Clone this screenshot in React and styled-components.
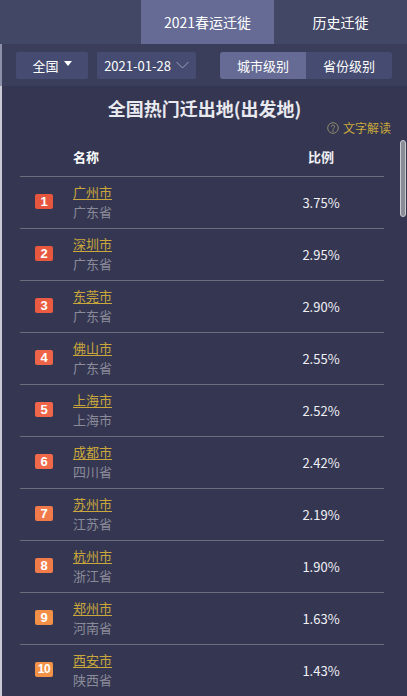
import React from 'react';
import styled, {createGlobalStyle} from 'styled-components';

const GlobalStyle = createGlobalStyle`
  body {
    margin: 0;
    background: #353752;
    font-family: "Noto Sans CJK SC", "Noto Sans", sans-serif;
  }
`;

const StyledPage = styled.div`
  position: relative;
  width: 407px;
  height: 696px;
  overflow: hidden;
  background: #353752;
`;

const StyledTopBar = styled.div`
  display: flex;
  justify-content: flex-end;
  height: 44px;
  background: #434766;
`;

const StyledTab = styled.div`
  width: 133px;
  display: flex;
  align-items: center;
  justify-content: center;
  font-size: 14px;
  color: #ffffff;
  background: ${props => props.active ? '#656b95' : 'transparent'};
`;

const StyledFilterBar = styled.div`
  display: flex;
  align-items: center;
  height: 42px;
  padding: 0 15px 0 14px;
  background: #3b3e5a;
  border-left: 2px solid #8c90a8;
`;

const StyledSelect = styled.div`
  display: flex;
  align-items: center;
  justify-content: center;
  gap: 5px;
  width: ${props => props.width}px;
  height: 27px;
  margin-right: 9px;
  background: #464c71;
  border-radius: 2px;
  color: #ffffff;
  font-size: 13px;
`;

const StyledCaret = styled.span`
  width: 0;
  height: 0;
  border-left: 4px solid transparent;
  border-right: 4px solid transparent;
  border-top: 5px solid #ffffff;
  margin-top: -3px;
`;

const StyledSegment = styled.div`
  display: flex;
  margin-left: auto;
  border-radius: 3px;
  overflow: hidden;
  background: #464c71;
`;

const StyledSegmentItem = styled.div`
  width: 86px;
  height: 27px;
  display: flex;
  align-items: center;
  justify-content: center;
  font-size: 13px;
  color: #ffffff;
  background: ${props => props.active ? '#656b95' : 'transparent'};
`;

const StyledMain = styled.div`
  border-left: 2px solid #c9cad4;
  padding-top: 11px;
  height: 100%;
`;

const StyledTitle = styled.div`
  text-align: center;
  font-size: 18px;
  line-height: 22px;
  font-weight: bold;
  color: #e9e9f0;
`;

const StyledExplain = styled.div`
  display: flex;
  justify-content: flex-end;
  align-items: center;
  gap: 4px;
  padding-right: 16px;
  line-height: 17px;
  font-size: 12px;
  color: #c9a73a;
`;

const StyledTable = styled.div`
  margin: 0 23px 0 18px;
`;

const StyledRow = styled.div`
  display: grid;
  grid-template-columns: 53px 1fr 76px;
  padding-right: 25px;
  align-items: center;
  border-bottom: 1px solid #6c6c7a;
`;

const StyledHeadRow = styled(StyledRow)`
  height: 40px;
  font-size: 13px;
  font-weight: bold;
  color: #ffffff;
`;

const StyledBodyRow = styled(StyledRow)`
  padding-top: 5px;
  padding-bottom: 6px;
`;

const StyledBadge = styled.span`
  justify-self: start;
  margin-left: 15px;
  margin-top: -1px;
  width: 18px;
  height: 15px;
  border-radius: 2px;
  background: ${props => props.color};
  color: #ffffff;
  font-size: ${props => props.wide ? '12px' : '13px'};
  font-weight: bold;
  line-height: 15px;
  text-align: center;
  font-family: "Liberation Sans", sans-serif;
  letter-spacing: ${props => props.wide ? '-0.5px' : '0'};
`;

const StyledName = styled.div`
  display: flex;
  flex-direction: column;
  font-size: 13px;
  line-height: 20px;
`;

const StyledCity = styled.span`
  color: #c9a73a;
  text-decoration: underline;
  text-underline-offset: 2px;
  width: max-content;
`;

const StyledProvince = styled.span`
  color: #8b8b99;
`;

const StyledPercent = styled.div`
  text-align: center;
  font-size: 13px;
  color: #f0f0f5;
`;

const StyledScrollThumb = styled.div`
  position: absolute;
  right: 1px;
  top: 140px;
  width: 4px;
  height: 75px;
  background: #8a8d96;
  border: 1px solid #c9cad0;
  border-radius: 3px;
`;

const BADGE_COLORS = ['#e6563f', '#e8583f', '#ea5b41', '#ee6449', '#ef664a', '#ef694a', '#f07a4a', '#f07c49', '#f39048', '#f39347'];

const ROWS = [
    ['广州市', '广东省', '3.75%'],
    ['深圳市', '广东省', '2.95%'],
    ['东莞市', '广东省', '2.90%'],
    ['佛山市', '广东省', '2.55%'],
    ['上海市', '上海市', '2.52%'],
    ['成都市', '四川省', '2.42%'],
    ['苏州市', '江苏省', '2.19%'],
    ['杭州市', '浙江省', '1.90%'],
    ['郑州市', '河南省', '1.63%'],
    ['西安市', '陕西省', '1.43%'],
];

function HelpIcon() {
    return (
        <svg width="12" height="12" viewBox="0 0 12 12" fill="none" stroke="#8f8a6a" strokeWidth="1">
            <circle cx="6" cy="6" r="5.3"/>
            <path d="M4.4 4.7a1.6 1.6 0 1 1 2.3 1.4c-.5.3-.7.6-.7 1.1v.4"/>
            <circle cx="6" cy="9" r="0.4" fill="#8f8a6a"/>
        </svg>
    );
}

function ChevronDown() {
    return (
        <svg width="13" height="8" viewBox="0 0 13 8" fill="none" stroke="#9a9fb8" strokeWidth="1">
            <path d="M0.5 1l6 6 6-6"/>
        </svg>
    );
}

export default function App(){
    return (
        <StyledPage>
            <GlobalStyle/>
            <StyledTopBar>
                <StyledTab active>2021春运迁徙</StyledTab>
                <StyledTab>历史迁徙</StyledTab>
            </StyledTopBar>
            <StyledFilterBar>
                <StyledSelect width={72}>全国 <StyledCaret/></StyledSelect>
                <StyledSelect width={99}>2021-01-28 <ChevronDown/></StyledSelect>
                <StyledSegment>
                    <StyledSegmentItem active>城市级别</StyledSegmentItem>
                    <StyledSegmentItem>省份级别</StyledSegmentItem>
                </StyledSegment>
            </StyledFilterBar>
            <StyledMain>
                <StyledTitle>全国热门迁出地(出发地)</StyledTitle>
                <StyledExplain><HelpIcon/>文字解读</StyledExplain>
                <StyledTable>
                    <StyledHeadRow>
                        <span/>
                        <span>名称</span>
                        <StyledPercent>比例</StyledPercent>
                    </StyledHeadRow>
                    {ROWS.map(([city, province, percent], i) => (
                        <StyledBodyRow key={city}>
                            <StyledBadge color={BADGE_COLORS[i]} wide={i === 9}>{i + 1}</StyledBadge>
                            <StyledName>
                                <StyledCity>{city}</StyledCity>
                                <StyledProvince>{province}</StyledProvince>
                            </StyledName>
                            <StyledPercent>{percent}</StyledPercent>
                        </StyledBodyRow>
                    ))}
                </StyledTable>
            </StyledMain>
            <StyledScrollThumb/>
        </StyledPage>
    );
}
